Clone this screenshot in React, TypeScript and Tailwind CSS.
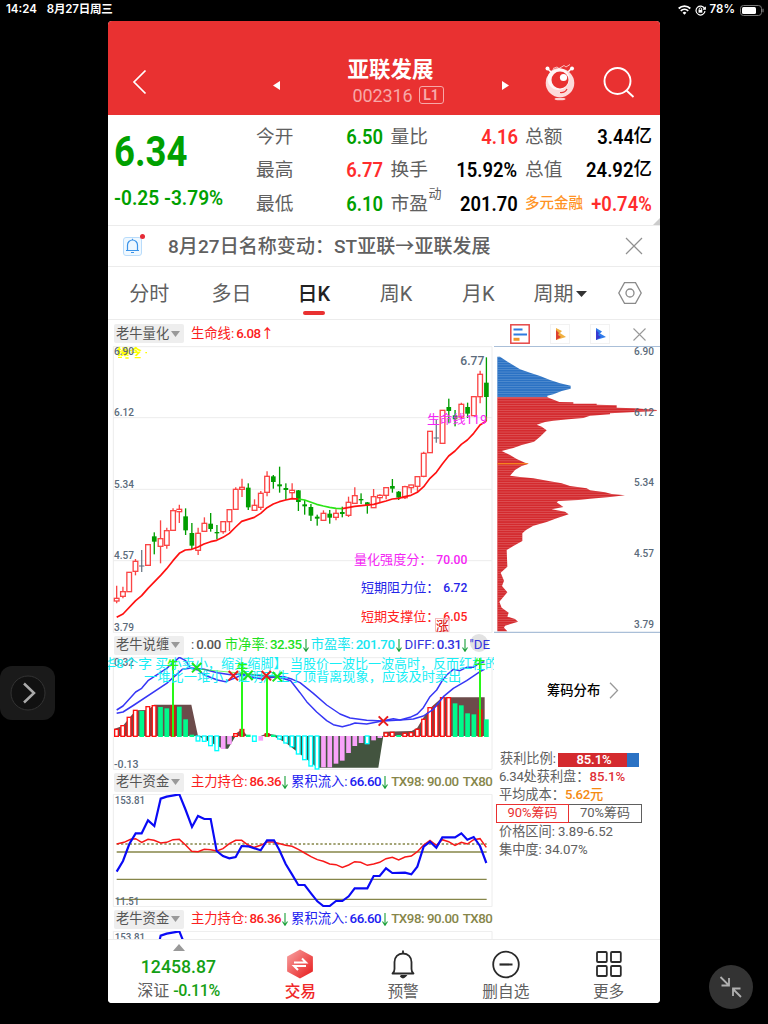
import type { ReactNode } from "react"
import clsx from "clsx"

const STEP = 18.8
const cx = (i: number) => 38 + STEP * i

// [high, body top, body bottom, low, kind]
type Candle = [number, number, number, number, "r" | "g" | "n"]

const candles: Candle[] = [
    [737, 775, 783, 790, "r"], [740, 755, 769, 775, "r"], [697, 697, 755, 755, "r"], [657, 664, 694, 706, "r"],
    [630, 677, 679, 696, "n"], [614, 614, 676, 676, "r"], [577, 589, 605, 643, "g"], [541, 596, 619, 670, "r"],
    [563, 572, 616, 626, "r"], [505, 512, 571, 571, "r"], [494, 508, 515, 549, "r"], [505, 529, 571, 585, "g"],
    [549, 579, 617, 628, "g"], [563, 580, 631, 645, "r"], [532, 550, 574, 574, "r"], [519, 551, 567, 575, "g"],
    [555, 576, 579, 598, "g"], [544, 545, 575, 581, "r"], [508, 509, 545, 573, "r"], [442, 448, 508, 508, "r"],
    [416, 442, 448, 471, "r"], [430, 443, 502, 510, "g"], [478, 496, 511, 511, "r"], [453, 460, 502, 510, "r"],
    [394, 409, 457, 469, "r"], [405, 409, 426, 446, "g"], [380, 433, 439, 458, "g"], [430, 444, 450, 480, "g"],
    [430, 451, 458, 475, "r"], [450, 451, 486, 513, "g"], [480, 493, 499, 524, "g"], [492, 501, 527, 543, "g"],
    [524, 530, 536, 557, "g"], [511, 520, 541, 541, "r"], [510, 521, 533, 551, "g"], [508, 520, 532, 541, "r"],
    [500, 516, 522, 532, "g"], [470, 487, 526, 531, "r"], [442, 467, 490, 490, "r"], [460, 477, 480, 492, "g"],
    [486, 487, 497, 521, "g"], [447, 470, 503, 503, "r"], [463, 466, 473, 488, "r"], [442, 443, 466, 478, "r"],
    [417, 438, 446, 458, "g"], [453, 455, 473, 480, "g"], [437, 440, 473, 477, "r"], [434, 435, 443, 460, "r"],
    [409, 410, 439, 455, "r"], [335, 340, 409, 412, "r"], [274, 274, 338, 338, "r"], [240, 293, 295, 308, "n"],
    [211, 211, 310, 310, "r"], [176, 201, 213, 250, "g"], [210, 226, 238, 259, "g"], [188, 193, 231, 236, "r"],
    [188, 201, 221, 234, "g"], [169, 170, 227, 227, "r"], [92, 103, 170, 190, "r"], [52, 128, 171, 243, "g"],
]

// histogram bars: [kind, end y], baseline at 318
const bars: [string, number][] = [
    ["r", 298], ["r", 287], ["r", 262], ["r", 241], ["g", 243], ["r", 230], ["r", 227], ["g", 231], ["g", 235], ["d", 227],
    ["g", 230], ["g", 268], ["g", 314], ["c", 332], ["c", 333], ["c", 346], ["c", 361], ["p", 356], ["p", 342], ["r", 311],
    ["d", 298], ["g", 314], ["c", 333], ["p", 331], ["d", 311], ["g", 314], ["c", 326], ["c", 338], ["c", 349], ["c", 371],
    ["c", 388], ["c", 407], ["c", 416], ["p", 411], ["p", 411], ["p", 400], ["p", 391], ["p", 368], ["p", 347], ["p", 338],
    ["c", 340], ["p", 330], ["p", 323], ["r", 309], ["r", 307], ["g", 315], ["r", 310], ["r", 308], ["r", 298], ["r", 268],
    ["r", 233], ["r", 228], ["r", 203], ["r", 203], ["g", 220], ["g", 226], ["g", 250], ["g", 253], ["d", 240], ["g", 268],
]

const fundRed =
    "38,222 60,217 80,208 95,206 113,217 132,208 150,211 170,219 188,217 207,209 226,208 244,224 263,244 282,245 301,238 320,239 338,243 357,236 376,221 395,211 413,211 432,225 451,232 470,226 489,216 508,216 545,226 564,229 583,238 602,249 621,260 640,269 658,274 677,282 696,284 715,292 734,285 752,275 770,277 790,286 809,282 827,277 846,266 865,262 884,270 903,261 922,258 940,245 959,225 978,211 997,226 1015,209 1034,215 1053,226 1072,217 1090,222 1109,209 1128,206 1147,232"
const fundBlue =
    "38,305 57,273 76,222 95,190 113,190 132,151 151,168 170,86 188,80 226,73 245,120 264,171 282,138 301,147 320,147 338,243 357,258 376,265 395,261 413,228 432,229 470,241 489,211 510,211 526,240 545,282 564,313 583,345 602,345 621,370 640,394 658,408 677,408 696,393 715,393 734,379 752,355 790,355 809,318 827,318 846,295 865,309 903,308 922,313 940,290 959,230 978,215 997,233 1015,202 1053,202 1072,190 1090,209 1109,201 1128,228 1147,279"

const chipBlue = "22,50 30,50 48,62 90,88 120,98 150,108 180,120 210,130 242,137 242,146 215,153 190,163 172,167 172,172 22,172"
const chipRed =
    "22,172 172,172 208,186 250,187 250,191 320,191 320,194 380,196 380,203 435,205 500,210 500,213 435,216 360,220 360,223 300,227 280,234 235,238 190,242 165,246 140,254 155,260 170,271 150,290 132,305 95,315 70,324 35,333 60,345 80,357 105,368 116,371 95,378 75,390 60,407 90,411 130,415 180,424 215,430 240,438 290,445 300,451 345,457 365,462 405,466 360,471 300,476 265,480 205,483 200,487 220,501 185,508 225,515 236,523 200,535 170,546 130,557 108,570 97,580 97,603 70,618 50,630 52,680 32,698 42,722 36,738 52,757 28,785 35,803 56,818 52,830 75,837 84,845 45,857 42,863 52,874 22,874"

function Label({ x, y, w, size = 33, fill = "#5b6b7b", weight = 500, children }: { x: number; y: number; w: number; size?: number; fill?: string; weight?: number; children: ReactNode }) {
    return (
        <text x={x} y={y} textLength={w} lengthAdjust="spacingAndGlyphs" fontSize={size} fill={fill} fontWeight={weight}>
            {children}
        </text>
    )
}

function Cross({ x, y, color }: { x: number; y: number; color: string }) {
    return <path d={`M${x - 14} ${y - 14}l28 28m0-28l-28 28`} stroke={color} strokeWidth="6" />
}

function StatusBar() {
    return (
        <div className="flex h-[21px] items-center justify-between pl-[6px] pr-[4px] font-['Inter','Noto_Sans_CJK_SC',sans-serif] text-[11.5px] font-semibold text-white">
            <div className="flex gap-[10px] pb-[1px]">
                <span>14:24</span>
                <span className="tracking-[-0.2px]">8月27日周三</span>
            </div>
            <div className="flex items-center pb-[1px]">
                <svg width="13" height="10" viewBox="0 0 13 10" fill="none" stroke="#fff" strokeWidth="1.8">
                    <path d="M.7 3.5a8.3 8.3 0 0 1 11.6 0M2.8 5.9a5.3 5.3 0 0 1 7.4 0" />
                    <path d="M4.6 7.8a2.7 2.7 0 0 1 3.8 0L6.5 9.8z" fill="#fff" stroke="none" />
                </svg>
                <svg className="ml-[4px]" width="11" height="11" viewBox="0 0 11 11" fill="none" stroke="#fff" strokeWidth="1.2">
                    <path d="M9.6 3.6A4.5 4.5 0 1 0 10 6.2M10.3 1.8v2.4H7.9" />
                    <path d="M4.2 5V4a1.2 1.2 0 0 1 2.4 0v1" strokeWidth=".9" />
                    <rect x="3.5" y="4.9" width="3.8" height="2.8" fill="#fff" stroke="none" />
                </svg>
                <span className="ml-[4px]">78%</span>
                <svg className="ml-[5px]" width="24" height="11" viewBox="0 0 24 11">
                    <rect x=".5" y=".5" width="21" height="10" rx="3" fill="none" stroke="#777" />
                    <rect x="2" y="2" width="14" height="7" rx="1.5" fill="#fff" />
                    <path d="M23 3.7v3.6" stroke="#777" strokeWidth="1.2" />
                </svg>
            </div>
        </div>
    )
}

function Header() {
    return (
        <header className="flex h-[94px] items-end bg-[#e93131] text-white">
            <div className="flex h-[66px] w-full items-center">
                <svg className="ml-[24px]" width="15" height="26" viewBox="0 0 15 26" fill="none" stroke="#fff" strokeWidth="1.7">
                    <path d="M13.5 1.5L2 13l11.5 11.5" />
                </svg>
                <svg className="ml-[126px] mt-[6px]" width="7" height="9" viewBox="0 0 7 9"><path d="M7 0v9L0 4.5z" fill="#fff" /></svg>
                <div className="ml-[54px] flex w-[128px] flex-col items-center">
                    <h1 className="mr-[15px] text-[21.5px] font-bold leading-[26px]">亚联发展</h1>
                    <div className="flex items-center gap-[6px] text-[#f7a8a8]">
                        <span className="text-[18px] leading-[25px] tracking-[-0.1px]">002316</span>
                        <span className="flex h-[18px] w-[25px] items-center justify-center rounded-[3px] border border-[#f7a8a8] text-[14px] font-bold">L1</span>
                    </div>
                </div>
                <svg className="ml-[40px] mt-[6px]" width="7" height="9" viewBox="0 0 7 9"><path d="M0 0v9l7-4.5z" fill="#fff" /></svg>
                {/* Mascot */}
                <svg className="ml-[35px] mt-[1px]" width="32" height="38" viewBox="0 0 32 38">
                    <path d="M4 5l5 5M27 5l-5 5" stroke="#fff" strokeWidth="1.5" />
                    <circle cx="3.5" cy="4.5" r="2" fill="#fff" />
                    <circle cx="28" cy="4.5" r="2" fill="#fff" />
                    <path d="M9 4.5l4-1.5 2 1.500 5-3 2 1.500 4-2.500" fill="none" stroke="#f9c0c0" strokeWidth="1" />
                    <circle cx="16" cy="19" r="14.3" fill="#fddada" />
                    <circle cx="14.5" cy="15" r="11" fill="#fff" opacity=".75" />
                    <circle cx="16" cy="16" r="8.5" fill="#e93131" />
                    <circle cx="19.5" cy="13.5" r="3.6" fill="#fff" />
                    <path d="M16 28.5q5 .5 7-3.500" fill="none" stroke="#e93131" strokeWidth="1.2" />
                    <ellipse cx="16" cy="35" rx="5.5" ry="1.3" fill="#fbd0d0" />
                </svg>
                <svg className="ml-[27px]" width="32" height="32" viewBox="0 0 32 32" fill="none" stroke="#fff" strokeWidth="1.9">
                    <circle cx="14.5" cy="15" r="13" />
                    <path d="M23.5 24.500L30.500 31" />
                </svg>
            </div>
        </header>
    )
}

const quotes = [
    [
        { label: "今开", value: "6.50", color: "text-[#00a000]" },
        { label: "最高", value: "6.77", color: "text-[#ff2c2c]" },
        { label: "最低", value: "6.10", color: "text-[#00a000]" },
    ],
    [
        { label: "量比", value: "4.16", color: "text-[#ff2c2c]" },
        { label: "换手", value: "15.92%", color: "text-black" },
        { label: "市盈", sup: "动", value: "201.70", color: "text-black" },
    ],
    [
        { label: "总额", value: "3.44", unit: "亿", color: "text-black" },
        { label: "总值", value: "24.92", unit: "亿", color: "text-black" },
        { label: "多元金融", small: true, value: "+0.74%", color: "text-[#ff2c2c]" },
    ],
] as { label: string; value: string; color: string; sup?: string; unit?: string; small?: boolean }[][]

function Quote() {
    return (
        <section className="relative flex h-[110px] pt-[5px]">
            <div className="w-[148px] pl-[6px] text-[#00a000]">
                <div className="h-[61px] origin-left scale-x-[0.85] text-[43px] font-bold leading-[62px]">6.34</div>
                <div className="origin-left scale-x-[0.955] whitespace-nowrap text-[20px] font-semibold leading-[34px]">-0.25 -3.79%</div>
            </div>
            <div className="flex gap-[7.5px]">
                {quotes.map((col, c) => (
                    <div key={c} className="w-[127px]">
                        {col.map((q) => (
                            <div key={q.label} className="flex h-[33.5px] items-center justify-between whitespace-nowrap">
                                <span className={q.small ? "text-[14.5px] font-medium text-[#ff9326]" : "relative text-[18.7px] text-[#606060]"}>
                                    {q.label}
                                    {q.sup && <span className="absolute -top-[6px] left-[38px] text-[13px]">{q.sup}</span>}
                                </span>
                                <span className={clsx("flex items-center text-[20px] font-semibold", q.color)}>
                                    <span className="-ml-6 inline-block origin-right scale-x-[0.92]">{q.value}</span>
                                    {q.unit && <span className="text-[18.5px] font-medium">{q.unit}</span>}
                                </span>
                            </div>
                        ))}
                    </div>
                ))}
            </div>
            <div className="absolute bottom-0 right-0 h-0 w-0 border-b-[7px] border-l-[7px] border-b-[#ccc] border-l-transparent" />
        </section>
    )
}

function Notice() {
    return (
        <div className="flex h-[42px] items-center border-y border-[#ececec] pl-[15px] pr-[17px]">
            <span className="relative flex h-[19px] w-[19px] items-center justify-center rounded-[3px] border border-[#b9dcfb] bg-[#eff8ff]">
                <svg width="15" height="16" viewBox="0 0 15 16" fill="none" stroke="#3b93e8" strokeWidth="1.2">
                    <path d="M1 12.500h13M2.500 12.500V7a5 5 0 0 1 10 0v5.500M6 14.500h3M7.500 2V.8" />
                </svg>
                <span className="absolute -right-[4px] -top-[4px] h-[5px] w-[5px] rounded-full bg-[#e52b36]" />
            </span>
            <span className="ml-[26px] flex-1 whitespace-nowrap pt-[3px] text-[19px] font-medium tracking-[0.06px] text-[#606060]">8月27日名称变动：ST亚联→亚联发展</span>
            <svg width="18" height="18" viewBox="0 0 18 18" stroke="#909090" strokeWidth="1.2"><path d="M1 1l16 16M17 1L1 17" /></svg>
        </div>
    )
}

function Tabs() {
    return (
        <nav className="flex h-[53px] items-center border-b border-[#ececec] text-[20px] text-[#606060]">
            {["分时", "多日", "日K", "周K", "月K"].map((t) => (
                <div key={t} className={clsx("flex h-full w-[82.3px] flex-col items-center justify-end", t === "日K" && "font-medium text-[#222]")}>
                    <span className="leading-[34px]">{t}</span>
                    <span className={clsx("mb-[4px] h-[4px] w-[22px] rounded-full", t === "日K" && "bg-[#e93131]")} />
                </div>
            ))}
            <div className="flex w-[82px] items-center justify-center gap-[3px] pt-[2px]">
                周期
                <svg width="11" height="6" viewBox="0 0 11 6"><path d="M0 0h11L5.500 6z" fill="#333" /></svg>
            </div>
            <svg className="ml-[17px]" width="24" height="24" viewBox="0 0 24 24" fill="none" stroke="#8a8a8a" strokeWidth="1.3">
                <path d="M6.500 1.700h11L23.200 12l-5.700 10.300h-11L.8 12z" />
                <circle cx="12" cy="12" r="4" />
            </svg>
        </nav>
    )
}

function IndicatorHead({ name, tall, children }: { name: string; tall?: boolean; children: ReactNode }) {
    return (
        <div className={clsx("flex items-center overflow-hidden whitespace-nowrap pl-[6px] text-[13.3px]", tall ? "h-[26px] pt-[1px]" : "h-[24px]")}>
            <span className="flex h-[19px] w-[70px] shrink-0 items-center rounded-[2px] bg-[#eee] pl-[2px] text-[#555]">
                {name}
                <svg className="ml-[2px]" width="9" height="6" viewBox="0 0 9 6"><path d="M0 0h9L4.500 6z" fill="#999" /></svg>
            </span>
            <div className="ml-[7px] flex w-[303px] items-center overflow-hidden">{children}</div>
        </div>
    )
}

function Num({ children }: { children: ReactNode }) {
    return <span className="ml-[2px] text-[13.3px] font-medium tracking-[-0.45px]">{children}</span>
}

function Arrow() {
    return (
        <svg className="mx-[1px] shrink-0" width="6" height="13" viewBox="0 0 6 13" fill="none" stroke="#18a038" strokeWidth="1.1">
            <path d="M3 0v12M.5 8.500L3 12.300l2.500-3.800" />
        </svg>
    )
}

function PriceChart() {
    return (
        <svg className="block" width="386" height="287" viewBox="12 18 1158 861">
            <g stroke="#ececec" strokeWidth="3" fill="none">
                <path d="M28 20H1164V878H28zM28 233H1164M28 448H1164M28 662H1164" />
            </g>
            <Label x={40} y={44} w={74} size={28} fill="#ffff00" weight={900}>操今</Label>
            <path d="M42 52h12M64 54h10M92 53h18M124 38h5" stroke="#ff0" strokeWidth="4" />
            <Label x={30} y={45} w={60}>6.90</Label>
            <Label x={30} y={229} w={60}>6.12</Label>
            <Label x={30} y={444} w={60}>5.34</Label>
            <Label x={30} y={658} w={60}>4.57</Label>
            <Label x={30} y={872} w={60}>3.79</Label>
            {candles.map(([hi, top, bot, lo, kind], i) => {
                const x = cx(i)
                if (kind === "n")
                    return <path key={i} d={`M${x} ${hi}V${lo}M${x - 8} ${top + 1}h16`} stroke="#5b6b7b" strokeWidth="3.5" />
                if (kind === "g")
                    return (
                        <g key={i} fill="#009d00">
                            <rect x={x - 2} y={hi} width="4" height={lo - hi} />
                            <rect x={x - 7} y={top} width="14" height={Math.max(bot - top, 4)} />
                        </g>
                    )
                return (
                    <g key={i} stroke="#fb4545" strokeWidth="4" fill="#fff">
                        <path d={`M${x} ${hi}V${lo}`} />
                        <rect x={x - 7} y={top} width="14" height={bot - top} />
                    </g>
                )
            })}
            <g fill="none" strokeWidth="5" strokeLinejoin="round">
                <polyline stroke="#f11" points="38,832 57,822 95,782 113,767 132,745 170,706 188,686 207,662 226,640 244,630 263,628 282,621 300,612 320,605 338,601 357,592 376,580 395,561 413,544 432,538 451,532 470,520 489,503 508,492 526,485 545,480 564,476 583,477" />
                <polyline stroke="#2be516" points="583,477 602,480 621,487 638,493 658,498 677,502 696,505 715,506" />
                <polyline stroke="#f11" points="715,506 752,499 809,493 846,483 865,477 884,475 902,470 921,466 940,457 959,440 978,415 997,397 1015,372 1034,348 1053,333 1072,313 1090,300 1109,280 1128,255 1147,243" />
            </g>
            <Label x={1069} y={76} w={72} size={38}>6.77</Label>
            <Label x={969} y={252} w={181} size={37} fill="#f425f4" weight={400}>生命线119</Label>
            <Label x={750} y={672} w={235} size={39} fill="#f425f4" weight={400}>量化强度分：</Label>
            <Label x={997} y={672} w={93} size={38} fill="#f425f4">70.00</Label>
            <Label x={771} y={756} w={235} size={39} fill="#2525e8" weight={400}>短期阻力位：</Label>
            <Label x={1018} y={756} w={72} size={38} fill="#2525e8">6.72</Label>
            <Label x={771} y={844} w={235} size={39} fill="#f22" weight={400}>短期支撑位：</Label>
            <Label x={1018} y={844} w={72} size={38} fill="#f22">6.05</Label>
            <rect x="995" y="835" width="40" height="39" fill="#fff" fillOpacity=".6" stroke="#e99" strokeWidth="2" />
            <Label x={996} y={869} w={38} size={38} fill="#d22">涨</Label>
        </svg>
    )
}

function DivergenceChart() {
    return (
        <svg className="block" width="386" height="113" viewBox="12 81 1158 339">
            <path d="M28 83H1164V418H28z" stroke="#ececec" strokeWidth="3" fill="none" />
            <g fill="#6c4c4b">
                <path d="M30 318V297L57 287 95 241 132 240 150 224H262L282 318z" />
                <path d="M385 318L414 298 430 318zM838 318V305L923 303 940 293 959 262 978 235 1015 202H1142V318zM470 318L489 310 526 318z" />
            </g>
            <path fill="#43543f" d="M282 318L357 356H372L395 318zM508 318L545 338 640 413H823L838 318z" />
            {bars.map(([kind, y], i) => {
                const x = cx(i) - 6
                const top = Math.min(318, y)
                const h = Math.abs(y - 318) + 1
                if (kind === "g") return <rect key={i} x={x - 1} y={top} width="14" height={h + 2} fill="#00fa8c" />
                if (kind === "p") return <rect key={i} x={x - 1} y={top} width="14" height={h} fill="#f9a3f9" />
                if (kind === "d") return <rect key={i} x={x} y={top} width="12" height={h} fill="#b33a10" stroke="#e11" strokeWidth="3" />
                return <rect key={i} x={x} y={top} width="11" height={h} fill="#fff" stroke={kind === "r" ? "#f11" : "#0ff"} strokeWidth="4" />
            })}
            <g fill="none" stroke="#3636f5" strokeWidth="4.5" strokeLinejoin="round">
                <polyline points="38,240 57,228 95,186 113,175 132,152 188,115 226,82 245,92 260,115 282,120 301,135 340,150 365,155 390,145 413,135 470,146 520,140 560,152 588,188 608,215 638,246 668,272 688,284 715,290 738,284 753,279 788,282 823,275 868,266 888,270 918,262 940,252 958,233 978,200 998,180 1013,155 1028,135 1048,118 1068,122 1088,112 1108,112 1128,98 1141,95" />
                <polyline points="38,250 57,246 90,225 188,160 235,118 262,114 300,118 340,128 380,134 413,132 470,137 540,140 565,148 588,158 628,190 668,225 708,252 738,264 788,271 838,273 888,270 928,267 958,258 988,238 1018,200 1048,175 1088,152 1128,125 1141,118" />
            </g>
            <Label x={30} y={109} w={60}>0.32</Label>
            <Label x={30} y={414} w={74}>-0.13</Label>
            <path d="M207 90V320M414 105V320M489 135V320M1128 85V320" stroke="#28f718" strokeWidth="6" />
            <path d="M280 117L520 140" stroke="#28f718" strokeWidth="2" />
            <Label x={-6} y={114} w={140 + 10} size={39} fill="#17eef5" weight={400}>华8个字</Label>
            <Label x={154} y={114} w={394} size={39} fill="#17eef5" weight={400}>买小卖小，缩头缩脚】</Label>
            <Label x={558} y={114} w={624} size={39} fill="#17eef5" weight={400}>当股价一波比一波高时，反而红柱的</Label>
            <Label x={120} y={153} w={952} size={39} fill="#17eef5" weight={400}>一堆比一堆小，证明产生了顶背离现象，应该及时卖出</Label>
            <Label x={190} y={116} w={34} size={34} fill="#28f718" weight={700}>牛</Label>
            <Label x={398} y={126} w={34} size={34} fill="#28f718" weight={700}>牛</Label>
            <Label x={1111} y={114} w={34} size={34} fill="#28f718" weight={700}>牛</Label>
            <Cross x={278} y={113} color="#1de51d" />
            <Cross x={388} y={137} color="#e81b1b" />
            <Cross x={432} y={136} color="#1de51d" />
            <Cross x={487} y={137} color="#e81b1b" />
            <Cross x={520} y={140} color="#1de51d" />
            <Cross x={838} y={273} color="#e81b1b" />
        </svg>
    )
}

function FundChart({ height }: { height: number }) {
    return (
        <svg className="block" width="386" height={height} viewBox={`12 72 1158 ${height * 3}`}>
            <path d="M28 73H1164V410H28z" stroke="#ececec" strokeWidth="3" fill="none" />
            <g stroke="#86864a" strokeWidth="4">
                <path d="M38 222H1148" strokeDasharray="7 6" />
                <path d="M38 246H1148M38 328H1148M38 388H1148" />
            </g>
            <Label x={32} y={101} w={91}>153.81</Label>
            <Label x={32} y={406} w={74}>11.51</Label>
            <polyline points={fundRed} fill="none" stroke="#f81818" strokeWidth="4.5" />
            <polyline points={fundBlue} fill="none" stroke="#0a0af5" strokeWidth="6.5" />
        </svg>
    )
}

function FundHead() {
    return (
        <IndicatorHead name="老牛资金">
            <span className="text-[#fb2020]">主力持仓:<Num>86.36</Num></span>
            <Arrow />
            <span className="ml-[2px] text-[#2020f0]">累积流入:<Num>66.60</Num></span>
            <Arrow />
            <span className="text-[#86864a]"><Num>TX98: 90.00</Num></span>
            <span className="ml-[2px] text-[#86864a]"><Num>TX80</Num></span>
        </IndicatorHead>
    )
}

function ChipTools() {
    return (
        <div className="flex h-[26px] items-center pl-[16px] pt-[2px]">
            <svg width="20" height="20" viewBox="0 0 20 20">
                <rect x=".8" y=".8" width="18.4" height="18.4" fill="#fff" stroke="#e54848" strokeWidth="1.5" />
                <path d="M3.500 5.500h9M3.500 10.500h13.500" stroke="#2f7be0" strokeWidth="2" />
                <path d="M3.500 15.300h6" stroke="#f0962a" strokeWidth="3" />
            </svg>
            <svg className="ml-[20px]" width="20" height="20" viewBox="0 0 20 20">
                <rect x=".5" y=".5" width="19" height="19" fill="none" stroke="#f2f2f2" />
                <path d="M6 4l6 3-2 2 6 4-10 3z" fill="#f0b040" />
                <path d="M6 6l3 3-1 2 3 2-5 3z" fill="#dd4030" />
            </svg>
            <svg className="ml-[20px]" width="20" height="20" viewBox="0 0 20 20">
                <rect x=".5" y=".5" width="19" height="19" fill="none" stroke="#f2f2f2" />
                <path d="M6 4l6 3.500-2 2 6 3.500-10 3z" fill="#2f7bea" />
                <path d="M6 6l3 3-1 2 3 2-5 3z" fill="#3838d0" />
            </svg>
            <svg className="ml-[23px]" width="13" height="13" viewBox="0 0 13 13" stroke="#999" strokeWidth="1.1"><path d="M.5.5l12 12M12.500.5l-12 12" /></svg>
        </div>
    )
}

function ChipChart() {
    return (
        <svg className="block" width="166" height="288" viewBox="12 18 498 864">
            <path d="M12 19H510M12 877H510" stroke="#aabfd8" strokeWidth="4" />
            <clipPath id="chips">
                <polygon points={chipBlue} />
                <polygon points={chipRed} />
            </clipPath>
            <polygon points={chipBlue} fill="#2b72c4" />
            <polygon points={chipRed} fill="#d42a2e" />
            <g clipPath="url(#chips)">
                {Array.from({ length: 115 }).map((_, i) => (
                    <rect key={i} x="22" y={52 + i * 7.2} width="480" height="1.8" fill="#fff" opacity=".28" />
                ))}
                <rect x="22" y="369" width="94" height="4" fill="#f5821f" />
            </g>
            <Label x={432} y={45} w={60}>6.90</Label>
            <Label x={432} y={227} w={60}>6.12</Label>
            <Label x={432} y={439} w={60}>5.34</Label>
            <Label x={432} y={652} w={60}>4.57</Label>
            <Label x={432} y={864} w={60}>3.79</Label>
        </svg>
    )
}

function ChipStats() {
    return (
        <div className="text-[13.2px] text-[#606060]">
            <div className="flex h-[113px] items-center justify-start gap-[9px] pl-[53px] text-[13.3px] font-medium text-black">
                筹码分布
                <svg width="10" height="17" viewBox="0 0 10 17" fill="none" stroke="#999" strokeWidth="1.3"><path d="M1 .8l7.500 7.700L1 16.200" /></svg>
            </div>
            <div className="pl-[5px] pt-[2px] leading-[17.7px]">
                <div className="flex h-[19px] items-center whitespace-nowrap pl-[1px]">
                    获利比例:
                    <div className="ml-[2px] mt-[3px] flex h-[14px] w-[81px] bg-[#2b72c4]">
                        <span className="flex w-[69px] items-center justify-center bg-[#d42a2e] pl-[3px] text-[13px] font-semibold tracking-[-0.1px] text-white">85.1%</span>
                    </div>
                </div>
                <div className="h-[18px] whitespace-nowrap">
                    <span className="tracking-[-0.3px]">6.34</span>处获利盘：<span className="font-medium text-[#e03038]">85.1%</span>
                </div>
                <div className="h-[18px]">平均成本：<span className="font-medium tracking-[-0.3px] text-[#f58a10]">5.62元</span></div>
                <div className="-ml-[3px] flex h-[19px] w-[146px] text-[13px] leading-[16px]">
                    <span className="w-[73px] border border-[#e93131] text-center text-[#e93131]">90%筹码</span>
                    <span className="w-[73px] border-y border-r border-[#606060] text-center">70%筹码</span>
                </div>
                <div className="h-[18px] whitespace-nowrap">价格区间:<span className="ml-[3px]">3.89-6.52</span></div>
                <div className="h-[18px] whitespace-nowrap">集中度:<span className="ml-[3px]">34.07%</span></div>
            </div>
        </div>
    )
}

function NavItem({ label, red, children }: { label: string; red?: boolean; children: ReactNode }) {
    return (
        <div className="flex w-[102.75px] flex-col items-center pt-[9px]">
            <svg width="30" height="30" viewBox="0 0 30 30" fill="none" stroke="#2a2a2a" strokeWidth="1.8">{children}</svg>
            <span className={clsx("mt-[3px] text-[15.7px] leading-[20px]", red ? "font-medium text-[#f02828]" : "text-[#606060]")}>{label}</span>
        </div>
    )
}

function BottomNav() {
    return (
        <footer className="flex h-[64px] border-t border-[#ececec] bg-white">
            <div className="flex w-[141px] flex-col items-center pt-[4px]">
                <svg width="12" height="7" viewBox="0 0 12 7"><path d="M6 0l6 7H0z" fill="#999" /></svg>
                <span className="mt-[4px] scale-x-[0.93] text-[19px] font-medium leading-[24px] text-[#14a014]">12458.87</span>
                <span className="whitespace-nowrap text-[16px] leading-[24px] text-[#606060]">
                    深证 <span className="font-medium tracking-[-0.4px] text-[#14a014]">-0.11%</span>
                </span>
            </div>
            <NavItem label="交易" red>
                <defs>
                    <linearGradient id="trade" x1="0" y1="0" x2="1" y2="1">
                        <stop offset="0" stopColor="#f7a0a0" />
                        <stop offset="1" stopColor="#e81c1c" />
                    </linearGradient>
                </defs>
                <path d="M15 1.500l12 6.500v14l-12 6.500L3 22V8z" fill="url(#trade)" stroke="url(#trade)" strokeLinejoin="round" />
                <path d="M9 13.500h12l-4-4M21 17H9l4 4" stroke="#fff" strokeWidth="2" />
            </NavItem>
            <NavItem label="预警">
                <path d="M4.500 24.500q2-1.500 2-4.500v-7c0-5 3.500-8.500 8.500-8.500s8.500 3.500 8.500 8.500v7q0 3 2 4.500zM15 4.500V1.500" strokeLinejoin="round" />
                <path d="M12.500 27h5q-2.500 3-5 0" fill="#2a2a2a" />
            </NavItem>
            <NavItem label="删自选">
                <circle cx="15" cy="15.5" r="12.8" />
                <path d="M8.500 15.500h13" strokeWidth="2.2" />
            </NavItem>
            <NavItem label="更多">
                <rect x="3" y="3" width="9.8" height="10" rx="1" />
                <rect x="17" y="3" width="9.8" height="10" rx="1" />
                <rect x="3" y="17" width="9.8" height="10" rx="1" />
                <rect x="17" y="17" width="9.8" height="10" rx="1" />
            </NavItem>
        </footer>
    )
}

export default function App() {
    return (
        <div className="relative h-[1024px] w-[768px] overflow-hidden bg-black font-['Roboto','Noto_Sans_CJK_SC',sans-serif]">
            <StatusBar />
            <main className="mx-auto h-[982px] w-[552px] overflow-hidden rounded-[4px] bg-white">
                <Header />
                <Quote />
                <Notice />
                <Tabs />
                <div className="flex h-[619px] overflow-hidden">
                    <div className="relative w-[386px]">
                        <IndicatorHead name="老牛量化" tall>
                            <span className="text-[#fb2020]">生命线:<Num>6.08↑</Num></span>
                        </IndicatorHead>
                        <PriceChart />
                        <div className="absolute left-[362px] top-[314px] h-[18px] w-[18px] rounded-full bg-[#e2e2e2]" />
                        <div className="relative">
                            <IndicatorHead name="老牛说缠">
                                <span className="text-[#555]">:<Num>0.00</Num></span>
                                <span className="ml-[4px] text-[#20e020]">市净率:<Num>32.35</Num></span>
                                <Arrow />
                                <span className="ml-[1px] text-[#17e6f0]">市盈率:<Num>201.70</Num></span>
                                <Arrow />
                                <span className="ml-[2px] text-[#3333dd]">DIFF:<Num>0.31</Num></span>
                                <Arrow />
                                <span className="text-[#3333dd]">"DE</span>
                            </IndicatorHead>
                        </div>
                        <DivergenceChart />
                        <FundHead />
                        <FundChart height={113} />
                        <FundHead />
                        <FundChart height={113} />
                    </div>
                    <div className="w-[166px]">
                        <ChipTools />
                        <ChipChart />
                        <ChipStats />
                    </div>
                </div>
                <BottomNav />
            </main>

            {/* Floating window controls */}
            <div className="absolute left-0 top-[666px] flex h-[54px] w-[55px] items-center justify-center rounded-[12px] bg-[#1a1a1a]">
                <svg width="36" height="36" viewBox="0 0 36 36" fill="none">
                    <circle cx="18" cy="18" r="17" fill="#111" stroke="#333" />
                    <path d="M14 8.500l10 9.500-10 9.500" stroke="#aaa" strokeWidth="2.5" />
                </svg>
            </div>
            <div className="absolute left-[709px] top-[965px] flex h-[44px] w-[44px] items-center justify-center rounded-full bg-[#333]">
                <svg width="24" height="24" viewBox="0 0 24 24" fill="none" stroke="#b0b0b0" strokeWidth="1.8">
                    <path d="M1.500 2l8.500 8.500M10 3v7.500H2.500M22 22l-8.500-8.500M14 21v-7.500h7.500" />
                </svg>
            </div>
        </div>
    )
}
